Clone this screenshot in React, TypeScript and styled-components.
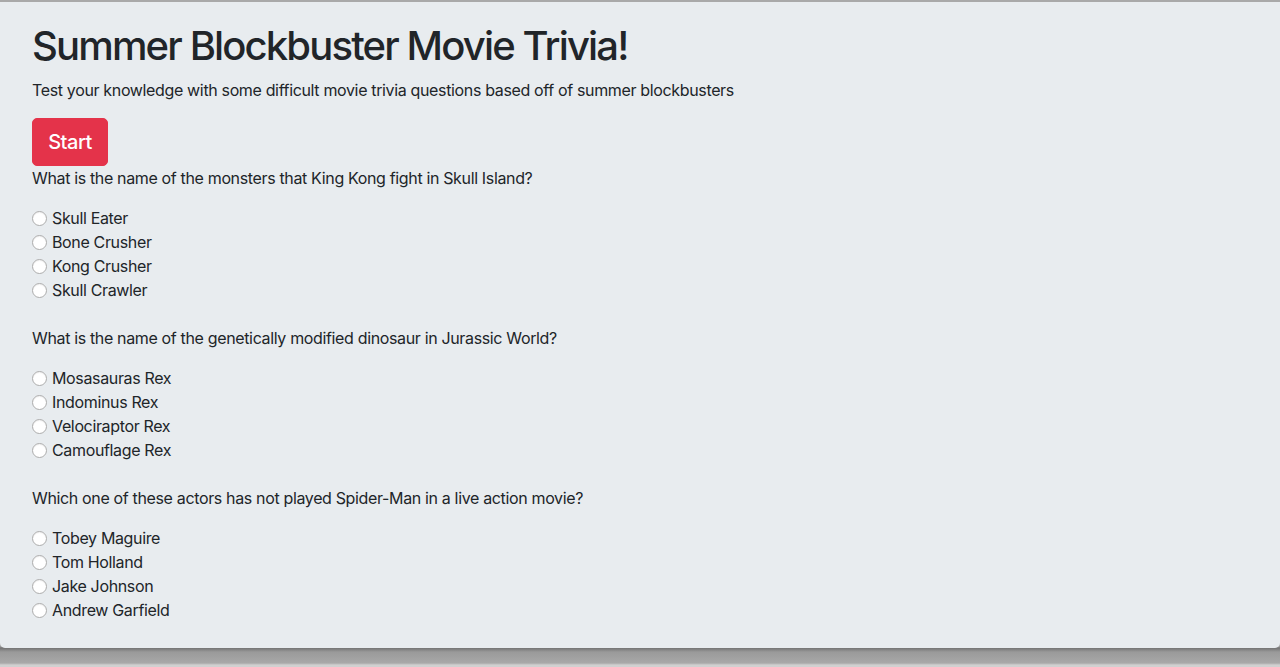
import styled, { createGlobalStyle } from "styled-components";

const GlobalStyle = createGlobalStyle`
    html, body {
        margin: 0;
        height: 100%;
    }
    html {
        background: linear-gradient(180deg, #a9a9a9 0px, #a9a9a9 646px, #747474 648px, #9a9a9a 652px, #a8a8a8 663px, #d0d0d0 665px, #d0d0d0 667px);
    }
    body {
        font-family: Inter, "Liberation Sans", Arial, sans-serif;
        color: #212529;
        letter-spacing: -0.35px;
    }
`

const Jumbotron = styled.div`
    margin-top: 2px;
    padding: 20px 32px 26px 32px;
    background-color: #e8ecef;
    border-radius: 0 0 5px 5px;
`
const Title = styled.h1`
    margin: 0 0 8px 0;
    font-size: 40px;
    font-weight: 500;
    line-height: 48px;
    letter-spacing: -1.85px;
`
const Lead = styled.p`
    margin: 0 0 16px 0;
    font-size: 16px;
    line-height: 24px;
`
const StartButton = styled.button`
    display: block;
    padding: 0;
    font-size: 20px;
    line-height: 30px;
    font-family: inherit;
    font-weight: 500;
    letter-spacing: -0.5px;
    color: #fff;
    background-color: #e4334a;
    border: 1px solid #e4334a;
    border-radius: 5px;
    height: 48px;
    width: 76px;
    cursor: pointer;
`
const Question = styled.div<{ $first?: boolean }>`
    margin-top: ${(p) => (p.$first ? "0" : "24px")};
`
const Prompt = styled.p`
    margin: 0 0 16px 0;
    font-size: 16px;
    line-height: 24px;
`
const Option = styled.label`
    display: flex;
    align-items: center;
    height: 24px;
    font-size: 16px;
    line-height: 24px;
`
const Radio = styled.input`
    appearance: none;
    width: 15px;
    height: 15px;
    margin: 0 5px 0 0;
    border-radius: 50%;
    border: 1px solid #acacac;
    background: #fff;
    box-shadow: inset 0 1px 1px rgba(0,0,0,0.06);
`

const questions = [
    {
        q: "What is the name of the monsters that King Kong fight in Skull Island?",
        options: ["Skull Eater", "Bone Crusher", "Kong Crusher", "Skull Crawler"],
    },
    {
        q: "What is the name of the genetically modified dinosaur in Jurassic World?",
        options: ["Mosasauras Rex", "Indominus Rex", "Velociraptor Rex", "Camouflage Rex"],
    },
    {
        q: "Which one of these actors has not played Spider-Man in a live action movie?",
        options: ["Tobey Maguire", "Tom Holland", "Jake Johnson", "Andrew Garfield"],
    },
]

export default function App() {
    return (
        <>
            <GlobalStyle />
            <Jumbotron>
                <Title>Summer Blockbuster Movie Trivia!</Title>
                <Lead>Test your knowledge with some difficult movie trivia questions based off of summer blockbusters</Lead>
                <StartButton>Start</StartButton>
                {questions.map((item, i) => (
                    <Question key={i} $first={i === 0}>
                        <Prompt>{item.q}</Prompt>
                        {item.options.map((opt) => (
                            <Option key={opt}>
                                <Radio type="radio" name={"q" + i} value={opt} />
                                {opt}
                            </Option>
                        ))}
                    </Question>
                ))}
            </Jumbotron>
        </>
    )
}
